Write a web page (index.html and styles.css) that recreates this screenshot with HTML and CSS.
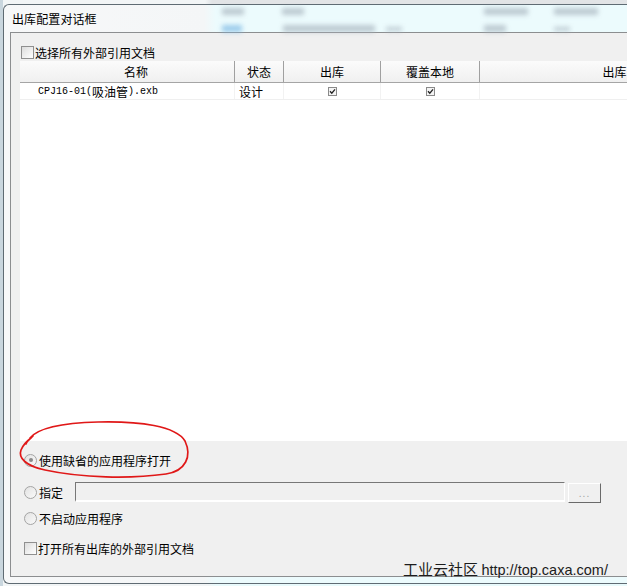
FILE: index.html
```html
<!DOCTYPE html>
<html lang="zh-CN">

<head>
  <meta charset="UTF-8">
  <title>出库配置对话框</title>
  <link rel="stylesheet" href="styles.css">
</head>

<body>
  <div class="backdrop-top"></div>

  <div class="window">
    <div class="titlebar">
      <span class="title">出库配置对话框</span>
      <!-- blurred rows of the app behind the glass frame -->
      <span class="smudge s1"></span>
      <span class="smudge s2"></span>
      <span class="smudge s3"></span>
      <span class="smudge s4"></span>
      <span class="smudge s5 blue"></span>
      <span class="smudge s6"></span>
      <span class="smudge s7"></span>
      <span class="smudge s8"></span>
      <span class="smudge s9"></span>
    </div>

    <div class="client">
      <label class="opt top-check">
        <span class="box"></span>选择所有外部引用文档
      </label>

      <div class="list">
        <div class="list-head">
          <div class="col c-name">名称</div>
          <div class="col c-state">状态</div>
          <div class="col c-out">出库</div>
          <div class="col c-over">覆盖本地</div>
          <div class="col c-path">出库</div>
        </div>
        <div class="list-row">
          <div class="col c-name"><span class="mono">CPJ16-01(</span>吸油管<span class="mono">).exb</span></div>
          <div class="col c-state left">设计</div>
          <div class="col c-out"><span class="tick"><svg width="9" height="9" viewBox="0 0 9 9"><rect x="0.5" y="0.5" width="8" height="8" fill="#f4f4f4" stroke="#8a8a8a"/><path d="M2 4.2 L3.8 6.2 L7 2.4" fill="none" stroke="#222" stroke-width="1.3"/></svg></span></div>
          <div class="col c-over"><span class="tick"><svg width="9" height="9" viewBox="0 0 9 9"><rect x="0.5" y="0.5" width="8" height="8" fill="#f4f4f4" stroke="#8a8a8a"/><path d="M2 4.2 L3.8 6.2 L7 2.4" fill="none" stroke="#222" stroke-width="1.3"/></svg></span></div>
          <div class="col c-path"></div>
        </div>
      </div>

      <label class="opt r1">
        <span class="radio on"></span>使用缺省的应用程序打开
      </label>
      <div class="opt r2">
        <span class="radio"></span>指定
        <div class="field"></div>
        <div class="btn">...</div>
      </div>
      <label class="opt r3">
        <span class="radio"></span>不启动应用程序
      </label>
      <label class="opt r4">
        <span class="box"></span>打开所有出库的外部引用文档
      </label>
    </div>
    <div class="frame-bottom"></div>
  </div>

  <svg class="mark" width="627" height="586" viewBox="0 0 627 586">
    <path d="M33 436 C30 439, 27 441, 26 444 M30 438 C38 428, 62 423, 98 422 C140 421, 176 426, 185 441 C192 456, 186 471, 166 474 C130 479, 82 478, 45 470 C26 466, 18 458, 21 450 C23 445, 27 441, 31 438"
      fill="none" stroke="#e01818" stroke-width="1.7" stroke-linecap="round"/>
  </svg>

  <div class="watermark">工业云社区 <span class="url">http://top.caxa.com/</span></div>
</body>

</html>
```

FILE: styles.css
```css
body {
  margin: 0;
  width: 627px;
  height: 586px;
  overflow: hidden;
  position: relative;
  font-family: "Noto Sans CJK SC", sans-serif;
  font-size: 12px;
  color: #000;
  background: linear-gradient(to right, #c9d6de 0, #c9d6de 3px, #f2f5f6 3px, #f2f5f6 208px, #e9fafc 216px);
}
.backdrop-top {
  height: 4px;
  background: linear-gradient(to right, transparent 0, transparent 205px, #e2e4e6 212px);
}
.window {
  margin-left: 3px;
  width: 720px;
  border: 1px solid #5f6b73;
  border-right: none;
  border-radius: 6px 0 0 6px;
  background: linear-gradient(to right, #f7f8f9 0, #f4f6f7 200px, #ecfbfd 212px);
}
.titlebar {
  height: 27px;
  display: flex;
  align-items: center;
  padding-left: 8px;
}
.title {
  font-size: 12px;
  letter-spacing: 0.1px;
}
.smudge {
  position: absolute;
  height: 7px;
  background: #a9b6c0;
  filter: blur(2.5px);
  opacity: 0.7;
}
.smudge.blue { background: #7ab8e4; }
.s1 { left: 222px; top: 8px; width: 22px; }
.s2 { left: 282px; top: 8px; width: 22px; }
.s3 { left: 484px; top: 8px; width: 44px; }
.s4 { left: 554px; top: 8px; width: 44px; }
.s5 { left: 222px; top: 25px; width: 20px; }
.s6 { left: 283px; top: 25px; width: 92px; }
.s7 { left: 386px; top: 27px; width: 16px; height: 4px; }
.s8 { left: 484px; top: 25px; width: 22px; }
.s9 { left: 554px; top: 27px; width: 16px; height: 4px; }

.client {
  margin-left: 6px;
  height: 543px;
  border: 1px solid #8c8e90;
  border-right: none;
  background: #f0f0f0;
}
.frame-bottom {
  height: 6px;
}

.opt {
  display: flex;
  align-items: center;
  height: 16px;
  padding-left: 13px;
}
.top-check {
  margin-top: 11px;
  padding-left: 10px;
}
.box {
  width: 11px;
  height: 11px;
  margin-right: 1px;
  border: 1px solid #8f8f8f;
  background: linear-gradient(135deg, #dcdcdc 0%, #f5f5f5 70%, #fff 100%);
}
.radio {
  width: 11px;
  height: 11px;
  margin-right: 2px;
  border: 1px solid #a4a4a4;
  border-radius: 50%;
  background: linear-gradient(135deg, #e2e2e2, #fafafa);
  display: flex;
  align-items: center;
  justify-content: center;
}
.radio.on::after {
  content: "";
  width: 4px;
  height: 4px;
  border-radius: 50%;
  background: #8a8a8a;
}

.list {
  margin: 1px 0 0 9px;
  height: 380px;
  background: #fff;
}
.list-head, .list-row {
  display: flex;
}
.list-head {
  height: 21px;
  border-bottom: 1px solid #a5a5a5;
  background: linear-gradient(#fbfbfb, #f0f0f0);
}
.list-head .col {
  border-right: 1px solid #a0a0a0;
  justify-content: center;
}
.list-row {
  height: 16px;
  border-bottom: 1px solid #efefef;
}
.list-row .col {
  border-right: 1px solid #f2f2f2;
  justify-content: center;
}
.col {
  display: flex;
  align-items: center;
  box-sizing: border-box;
  flex-shrink: 0;
}
.c-name { width: 215px; padding-left: 18px; }
.c-state { width: 49px; }
.c-out { width: 97px; }
.c-over { width: 99px; }
.c-path { width: 270px; }
.list-row .c-name {
  justify-content: flex-start;
}
.list-row .left {
  justify-content: flex-start;
  padding-left: 4px;
}
.mono {
  font-family: "Liberation Mono", monospace;
  font-size: 10px;
}
.tick {
  display: flex;
  margin-top: 1px;
}

.r1 { margin-top: 11px; }
.r2 {
  margin-top: 14px;
  height: 21px;
}
.r3 { margin-top: 7px; }
.r4 { margin-top: 14px; }
.field {
  width: 488px;
  height: 17px;
  margin-left: 12px;
  margin-top: -1px;
  border-top: 1px solid #777;
  border-left: 1px solid #777;
  border-right: 1px solid #fff;
  border-bottom: 2px solid #fff;
  background: #f0f0f0;
}
.btn {
  width: 31px;
  height: 18px;
  margin-left: 3px;
  margin-top: 1px;
  border-top: 1px solid #fff;
  border-left: 1px solid #fff;
  border-right: 1px solid #6a6a6a;
  border-bottom: 1px solid #6a6a6a;
  background: #f0f0f0;
  color: #a0a0a0;
  font-family: "Liberation Sans", sans-serif;
  font-size: 10px;
  letter-spacing: 1px;
  display: flex;
  align-items: center;
  justify-content: center;
}

.mark {
  position: absolute;
  left: 0;
  top: 0;
  pointer-events: none;
}
.watermark {
  position: absolute;
  left: 403px;
  top: 558px;
  font-size: 15px;
  color: #1c1c1c;
  white-space: nowrap;
}
.url {
  font-family: "Liberation Sans", sans-serif;
  font-size: 14.5px;
}
```
